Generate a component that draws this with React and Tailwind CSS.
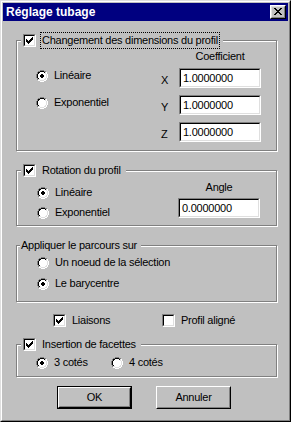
import React from 'react';

const OUTER = [[4,5,6,7],[2,3,8,9],[1,10],[1,10],[0,11],[0,11],[0,11],[0,11],[1,10],[1,10],[2,3,8,9],[4,5,6,7]];
const INNER = [[],[4,5,6,7],[2,3,8,9],[2,9],[1,10],[1,10],[1,10],[1,10],[2,9],[2,3,8,9],[4,5,6,7],[]];
const FILL = [null,null,[4,7],[3,8],[2,9],[2,9],[2,9],[2,9],[3,8],[4,7],null,null];
const DOT = [null,null,null,null,[5,6],[4,7],[4,7],[5,6],null,null,null,null];
const CHECK = [[6,0,1],[5,1,2],[0,2,1],[4,2,3],[0,3,2],[3,3,3],[0,4,5],[1,5,3],[2,6,1]];
const CLOSE = [[0,0,2],[6,0,2],[1,1,2],[5,1,2],[2,2,4],[3,3,2],[2,4,4],[1,5,2],[5,5,2],[0,6,2],[6,6,2]];

function Radio({ checked }) {
  const px = [];
  OUTER.forEach((cols, r) => cols.forEach((c) => px.push(
    <rect key={`o${r}-${c}`} x={c} y={r} width="1" height="1" fill={r + c <= 10 ? '#808080' : '#ffffff'} />
  )));
  INNER.forEach((cols, r) => cols.forEach((c) => px.push(
    <rect key={`i${r}-${c}`} x={c} y={r} width="1" height="1" fill={r + c <= 10 ? '#000000' : '#dfdfdf'} />
  )));
  FILL.forEach((rg, r) => rg && px.push(
    <rect key={`f${r}`} x={rg[0]} y={r} width={rg[1] - rg[0] + 1} height="1" fill="#ffffff" />
  ));
  if (checked) DOT.forEach((rg, r) => rg && px.push(
    <rect key={`d${r}`} x={rg[0]} y={r} width={rg[1] - rg[0] + 1} height="1" fill="#000000" />
  ));
  return (
    <svg width="12" height="12" viewBox="0 0 12 12" shapeRendering="crispEdges" className="block shrink-0">
      {px}
    </svg>
  );
}

function Checkbox({ checked }) {
  return (
    <span className="block w-[13px] h-[13px] shrink-0 border border-t-[#808080] border-l-[#808080] border-r-white border-b-white">
      <span className="flex w-full h-full p-px border border-t-black border-l-black border-r-[#dfdfdf] border-b-[#dfdfdf] bg-white">
        {checked && (
          <svg width="7" height="7" viewBox="0 0 7 7" shapeRendering="crispEdges" className="block">
            {CHECK.map(([x, y, w], i) => <rect key={i} x={x} y={y} width={w} height="1" fill="#000" />)}
          </svg>
        )}
      </span>
    </span>
  );
}

function RadioRow({ checked, label }) {
  return (
    <div className="flex items-center h-[13px] gap-[6px]">
      <Radio checked={checked} />
      <span className="whitespace-nowrap">{label}</span>
    </div>
  );
}

function Field({ value }) {
  return (
    <div className="w-[82px] h-[20px] border border-t-[#808080] border-l-[#808080] border-r-white border-b-white">
      <div className="h-full flex items-center pl-[2px] bg-white border border-t-black border-l-black border-r-[#dfdfdf] border-b-[#dfdfdf]">
        {value}
      </div>
    </div>
  );
}

function AxisRow({ label }) {
  return (
    <div className="flex items-end">
      <span className="w-[18px] mb-px">{label}</span>
      <Field value="1.0000000" />
    </div>
  );
}

function CheckLegend({ label, focused }) {
  return (
    <div className="absolute left-[4px] top-[-9px] h-[17px] flex items-center bg-[#c0c0c0] pl-[2px] pr-[3px]">
      <Checkbox checked />
      <span
        className={
          focused
            ? 'ml-[4px] h-[17px] flex items-center px-px border border-dotted border-black whitespace-nowrap'
            : 'ml-[4px] h-[17px] flex items-center px-px border border-transparent whitespace-nowrap'
        }
      >
        {label}
      </span>
    </div>
  );
}

function Frame({ className, legend, children }) {
  return (
    <div className={`relative w-[261px] border border-[#808080] shadow-[inset_1px_1px_0_#fff,1px_1px_0_#fff] ${className}`}>
      {legend}
      {children}
    </div>
  );
}

function Button({ label, isDefault }) {
  if (isDefault) {
    return (
      <div className="w-[75px] h-[23px] border border-black">
        <div className="h-full border border-t-white border-l-white border-r-black border-b-black">
          <div className="h-full flex items-center justify-center border border-t-transparent border-l-transparent border-r-[#808080] border-b-[#808080]">
            {label}
          </div>
        </div>
      </div>
    );
  }
  return (
    <div className="w-[75px] h-[23px] border border-t-white border-l-white border-r-black border-b-black">
      <div className="h-full flex items-center justify-center border border-t-transparent border-l-transparent border-r-[#808080] border-b-[#808080]">
        {label}
      </div>
    </div>
  );
}

function CloseButton() {
  return (
    <div className="w-[16px] h-[14px] bg-[#c0c0c0] border border-t-white border-l-white border-r-black border-b-black">
      <div className="h-full flex justify-center items-start pt-px border border-t-[#dfdfdf] border-l-[#dfdfdf] border-r-[#808080] border-b-[#808080]">
        <svg width="8" height="7" viewBox="0 0 8 7" shapeRendering="crispEdges" className="block">
          {CLOSE.map(([x, y, w], i) => <rect key={i} x={x} y={y} width={w} height="1" fill="#000" />)}
        </svg>
      </div>
    </div>
  );
}

export default function App() {
  return (
    <div className="w-[291px] h-[422px] bg-[#c0c0c0] border border-t-[#dfdfdf] border-l-[#dfdfdf] border-r-black border-b-black font-['Liberation_Sans',Arial,sans-serif] text-[11px] leading-[13px] tracking-[-0.25px] text-black select-none">
      <div className="h-full p-px border border-t-white border-l-white border-r-[#808080] border-b-[#808080]">
        <div className="h-[18px] bg-[#000080] flex items-center justify-between pl-[3px] pr-[2px]">
          <span className="text-white font-bold text-[12px] leading-[18px] tracking-normal">Réglage tubage</span>
          <CloseButton />
        </div>

        <div className="flex flex-col pl-[13px]">
          <Frame className="mt-[19px] h-[111px]" legend={<CheckLegend label="Changement des dimensions du profil" focused />}>
            <div className="flex">
              <div className="w-[144px] pl-[19px] pt-[28px] flex flex-col gap-[14px]">
                <RadioRow checked label="Linéaire" />
                <RadioRow label="Exponentiel" />
              </div>
              <div className="pt-[9px] flex flex-col">
                <div className="ml-[18px] w-[82px] text-center">Coefficient</div>
                <div className="mt-[5px] flex flex-col gap-[7px]">
                  <AxisRow label="X" />
                  <AxisRow label="Y" />
                  <AxisRow label="Z" />
                </div>
              </div>
            </div>
          </Frame>

          <Frame className="mt-[19px] h-[56px]" legend={<CheckLegend label="Rotation du profil" />}>
            <div className="flex">
              <div className="w-[161px] pl-[20px] pt-[15px] flex flex-col gap-[7px]">
                <RadioRow checked label="Linéaire" />
                <RadioRow label="Exponentiel" />
              </div>
              <div className="pt-[10px] flex flex-col">
                <div className="w-[82px] text-center">Angle</div>
                <div className="mt-[4px]">
                  <Field value="0.0000000" />
                </div>
              </div>
            </div>
          </Frame>

          <Frame
            className="mt-[19px] h-[57px]"
            legend={
              <div className="absolute left-[3px] top-[-7px] h-[13px] bg-[#c0c0c0] pl-px pr-[4px] whitespace-nowrap">
                Appliquer le parcours sur
              </div>
            }
          >
            <div className="pl-[20px] pt-[10px] flex flex-col gap-[8px]">
              <RadioRow label="Un noeud de la sélection" />
              <RadioRow checked label="Le barycentre" />
            </div>
          </Frame>

          <div className="mt-[12px] pl-[37px] flex h-[13px]">
            <div className="w-[109px] flex items-center gap-[6px]">
              <Checkbox checked />
              <span>Liaisons</span>
            </div>
            <div className="flex items-center gap-[6px]">
              <Checkbox />
              <span>Profil aligné</span>
            </div>
          </div>

          <Frame className="mt-[17px] h-[33px]" legend={<CheckLegend label="Insertion de facettes" />}>
            <div className="pl-[19px] pt-[11px] flex">
              <div className="w-[75px]">
                <RadioRow checked label="3 cotés" />
              </div>
              <RadioRow label="4 cotés" />
            </div>
          </Frame>

          <div className="mt-[9px] pl-[41px] flex gap-[24px]">
            <Button label="OK" isDefault />
            <Button label="Annuler" />
          </div>
        </div>
      </div>
    </div>
  );
}
